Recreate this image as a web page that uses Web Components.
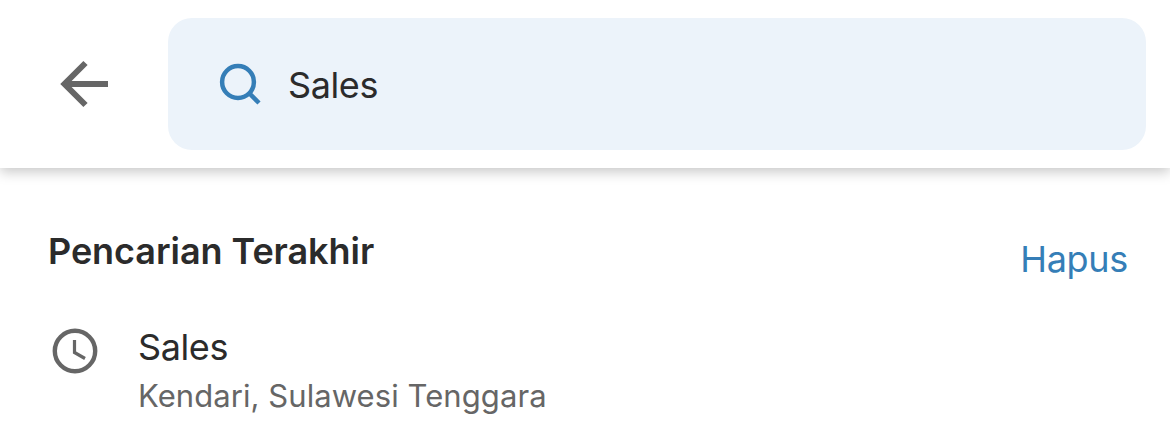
<!DOCTYPE html>
<html lang="id">
<head>
  <meta charset="utf-8">
  <title>Pencarian</title>
  <style>
    body {
      margin: 0;
      background: #fff;
      color: #2b2b2b;
      font-family: Inter, "Liberation Sans", sans-serif;
    }
  </style>
</head>
<body>
  <search-header>Sales</search-header>
  <recent-searches heading="Pencarian Terakhir" action="Hapus">
    <recent-item place="Kendari, Sulawesi Tenggara">Sales</recent-item>
  </recent-searches>

  <script>
    class SearchHeader extends HTMLElement {
      connectedCallback() {
        this.attachShadow({ mode: 'open' });
        this.shadowRoot.innerHTML = `
      <style>
        :host {
          display: block;
        }
        header {
          display: flex;
          align-items: center;
          box-sizing: border-box;
          height: 168px;
          padding: 18px 24px 18px 60px;
          gap: 60px;
          background: #fff;
          box-shadow: 0 4px 12px rgba(0, 0, 0, 0.22);
        }
        svg {
          display: block;
          flex: none;
        }
        .field {
          flex: 1;
          display: flex;
          align-items: center;
          height: 132px;
          padding-left: 51px;
          gap: 27px;
          box-sizing: border-box;
          border-radius: 24px;
          background: #ecf3fa;
        }
        .query {
          padding-top: 2px;
          font-size: 36px;
          line-height: 44px;
          letter-spacing: -0.4px;
        }
      </style>
      <header>
        <svg width="48" height="48" viewBox="0 0 48 48" fill="none" stroke="#666" stroke-width="6">
          <path d="M48 24H5M25.5 3L4.5 24L25.5 45"/>
        </svg>
        <div class="field">
          <svg width="42" height="42" viewBox="0 0 42 42" fill="none" stroke="#357eb7" stroke-width="4.5">
            <circle cx="19" cy="19" r="15.9"/>
            <path d="M30 30L40 40"/>
          </svg>
          <span class="query"><slot></slot></span>
        </div>
      </header>
    `;
      }
    }
    customElements.define('search-header', SearchHeader);

    class RecentSearches extends HTMLElement {
      connectedCallback() {
        this.attachShadow({ mode: 'open' });
        this.shadowRoot.innerHTML = `
      <style>
        :host {
          display: block;
          padding: 61px 42px 0 48px;
        }
        .top {
          display: flex;
          justify-content: space-between;
          height: 96px;
          line-height: 44px;
          font-size: 36px;
        }
        h2 {
          margin: 0;
          font-size: 36px;
          font-weight: 600;
          letter-spacing: -0.06px;
        }
        .action {
          padding-top: 8px;
          color: #357eb7;
          letter-spacing: -0.3px;
        }
      </style>
      <div class="top">
        <h2>${this.getAttribute('heading')}</h2>
        <span class="action">${this.getAttribute('action')}</span>
      </div>
      <slot></slot>
    `;
      }
    }
    customElements.define('recent-searches', RecentSearches);

    class RecentItem extends HTMLElement {
      connectedCallback() {
        this.attachShadow({ mode: 'open' });
        this.shadowRoot.innerHTML = `
      <style>
        :host {
          display: flex;
          gap: 40px;
          padding-left: 4px;
        }
        svg {
          display: block;
          flex: none;
          margin-top: 3px;
        }
        .title {
          height: 51px;
          font-size: 36px;
          line-height: 44px;
          letter-spacing: -0.4px;
        }
        .place {
          color: #666;
          font-size: 31px;
          line-height: 40px;
          letter-spacing: 0.07px;
        }
      </style>
      <svg width="46" height="46" viewBox="0 0 46 46" fill="none" stroke="#666">
        <circle cx="23" cy="23" r="20.2" stroke-width="4.4"/>
        <path d="M22.5 12V24.5L33 30.5" stroke-width="3.2"/>
      </svg>
      <div>
        <div class="title"><slot></slot></div>
        <div class="place">${this.getAttribute('place')}</div>
      </div>
    `;
      }
    }
    customElements.define('recent-item', RecentItem);
  </script>
</body>
</html>
